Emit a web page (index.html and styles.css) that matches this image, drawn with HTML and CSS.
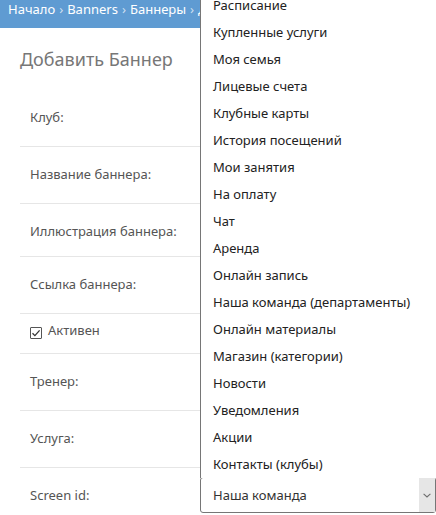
FILE: index.html
```html
<!DOCTYPE html>
<html lang="ru">
<head>
<meta charset="utf-8">
<title>Добавить Баннер</title>
<link rel="stylesheet" href="styles.css">
</head>
<body>
<div class="page">
  <div class="crumbs">
    <span>Начало</span><span class="sep">›</span><span>Banners</span><span class="sep">›</span><span>Баннеры</span><span class="sep">›</span><span>Добавить</span>
  </div>
  <h1 class="title">Добавить Баннер</h1>
  <div class="form">
    <div class="row"><div class="label">Клуб:</div></div>
    <div class="row"><div class="label">Название баннера:</div></div>
    <div class="row row-short"><div class="label">Иллюстрация баннера:</div></div>
    <div class="row"><div class="label">Ссылка баннера:</div></div>
    <div class="row row-check">
      <span class="checkbox">
        <svg width="12" height="12" viewBox="0 0 12 12"><path d="M2.5 6.2 L4.9 8.6 L9.6 3.4" fill="none" stroke="#333" stroke-width="1.3"/></svg>
      </span>
      <span class="check-text">Активен</span>
    </div>
    <div class="row"><div class="label">Тренер:</div></div>
    <div class="row"><div class="label">Услуга:</div></div>
    <div class="row row-select">
      <div class="label label-col">Screen id:</div>
      <div class="select">
        <span class="select-value">Наша команда</span>
        <span class="select-arrow">
          <svg width="8" height="5" viewBox="0 0 8 5"><path d="M0.6 0.8 L4 4 L7.4 0.8" fill="none" stroke="#6d6d6d" stroke-width="1.1"/></svg>
        </span>
        <ul class="menu">
          <li>Расписание</li>
          <li>Купленные услуги</li>
          <li>Моя семья</li>
          <li>Лицевые счета</li>
          <li>Клубные карты</li>
          <li>История посещений</li>
          <li>Мои занятия</li>
          <li>На оплату</li>
          <li>Чат</li>
          <li>Аренда</li>
          <li>Онлайн запись</li>
          <li>Наша команда (департаменты)</li>
          <li>Онлайн материалы</li>
          <li>Магазин (категории)</li>
          <li>Новости</li>
          <li>Уведомления</li>
          <li>Акции</li>
          <li>Контакты (клубы)</li>
        </ul>
      </div>
    </div>
  </div>
</div>
</body>
</html>
```
FILE: styles.css
```css
html, body {
  margin: 0;
  padding: 0;
  background: #fff;
}
body {
  font-family: "Noto Sans", "Open Sans", sans-serif;
  font-size: 13px;
  color: #555;
}
.page {
  position: relative;
  width: 436px;
  height: 515px;
  overflow: hidden;
}
.crumbs {
  height: 28px;
  box-sizing: border-box;
  padding: 0 0 0 8px;
  background: #5f9bd2;
  color: #fff;
  line-height: 18px;
  white-space: nowrap;
}
.crumbs .sep {
  margin: 0 4px;
  color: rgba(255, 255, 255, 0.7);
}
.title {
  margin: 19px 0 0 20px;
  height: 24px;
  font-size: 18px;
  line-height: 24px;
  font-weight: normal;
  color: #777;
}
.form {
  margin-top: 19px;
  padding: 0 20px;
}
.row {
  height: 57px;
  box-sizing: border-box;
  padding: 18px 10px 0;
  border-bottom: 1px solid #e6e6e6;
  line-height: 18px;
}
.row-short {
  height: 53px;
}
.row-check {
  height: 40px;
  padding-top: 7px;
  display: flex;
  align-items: flex-start;
}
.checkbox {
  display: flex;
  width: 12px;
  height: 12px;
  box-sizing: border-box;
  margin-top: 6px;
  border: 1px solid #555;
  border-radius: 1px;
  align-items: center;
  justify-content: center;
}
.checkbox svg {
  display: block;
  flex: none;
}
.check-text {
  margin-left: 6px;
}
.row-select {
  border-bottom: none;
  padding-top: 0;
  display: flex;
  align-items: flex-start;
}
.label-col {
  flex: none;
  width: 170px;
  padding-top: 18px;
}
.select {
  position: relative;
  flex: none;
  width: 236px;
  height: 36px;
  margin-top: 9px;
  box-sizing: border-box;
  border: 1px solid #767676;
  border-radius: 3px;
  display: flex;
  align-items: stretch;
  color: #333;
  background: #fff;
}
.select-value {
  flex: 1;
  padding-left: 12px;
  line-height: 34px;
}
.select-arrow {
  flex: none;
  width: 16px;
  background: #e6e6e6;
  display: flex;
  align-items: center;
  justify-content: center;
}
.menu {
  position: absolute;
  left: -1px;
  bottom: 100%;
  width: 240px;
  margin: 0;
  padding: 0;
  list-style: none;
  background: #fff;
  border-left: 1px solid #767676;
  z-index: 5;
  color: #222;
}
.menu li {
  height: 27px;
  line-height: 27px;
  padding-left: 12px;
  white-space: nowrap;
}
```
